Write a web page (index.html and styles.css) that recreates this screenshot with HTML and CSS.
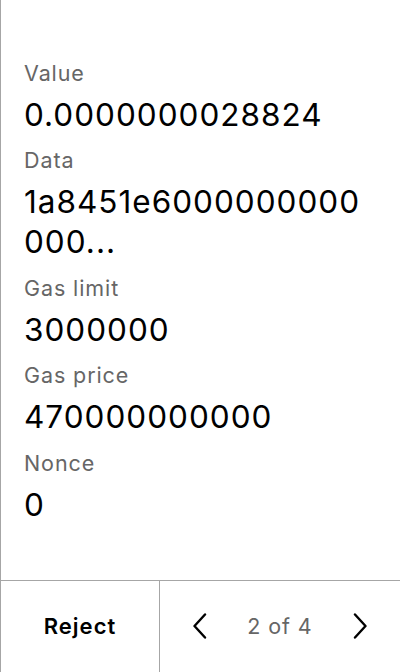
FILE: index.html
```html
<!DOCTYPE html>
<html lang="en">
<head>
<meta charset="utf-8">
<link rel="stylesheet" href="styles.css">
</head>
<body>
<div class="panel">
  <main class="fields">
    <div class="field">
      <div class="label">Value</div>
      <div class="value">0.0000000028824</div>
    </div>
    <div class="field">
      <div class="label">Data</div>
      <div class="value">1a8451e6000000000<br>000...</div>
    </div>
    <div class="field">
      <div class="label">Gas limit</div>
      <div class="value">3000000</div>
    </div>
    <div class="field">
      <div class="label">Gas price</div>
      <div class="value">470000000000</div>
    </div>
    <div class="field">
      <div class="label">Nonce</div>
      <div class="value">0</div>
    </div>
  </main>
  <footer class="footer">
    <button class="reject">Reject</button>
    <div class="pager">
      <button class="chev" aria-label="Previous">
        <svg width="16" height="26" viewBox="0 0 16 26"><path d="M13 1.5 L2.5 13 L13 24.5" fill="none" stroke="#000" stroke-width="2.4" stroke-linecap="round" stroke-linejoin="round"/></svg>
      </button>
      <span class="count">2 of 4</span>
      <button class="chev" aria-label="Next">
        <svg width="16" height="26" viewBox="0 0 16 26"><path d="M3 1.5 L13.5 13 L3 24.5" fill="none" stroke="#000" stroke-width="2.4" stroke-linecap="round" stroke-linejoin="round"/></svg>
      </button>
    </div>
  </footer>
</div>
</body>
</html>
```
FILE: styles.css
```css
html, body {
  margin: 0;
  padding: 0;
  background: #fff;
}
body {
  font-family: Inter, "Noto Sans", sans-serif;
  color: #000;
}
.panel {
  width: 400px;
  height: 672px;
  box-sizing: border-box;
  border-left: 1px solid #a6a6a6;
  display: flex;
  flex-direction: column;
}
.fields {
  flex: 1;
  padding: 58.5px 0 0 23px;
  display: flex;
  flex-direction: column;
  gap: 11.5px;
}
.label {
  font-size: 21.5px;
  line-height: 28px;
  letter-spacing: 0.9px;
  color: #666;
  margin-bottom: 8px;
}
.value {
  font-size: 31.5px;
  line-height: 40px;
  letter-spacing: 1px;
  color: #000;
}
.footer {
  height: 92px;
  border-top: 1px solid #a6a6a6;
  display: flex;
  box-sizing: border-box;
}
button {
  font-family: inherit;
  background: none;
  border: none;
  padding: 0;
  margin: 0;
  color: #000;
}
.reject {
  width: 159px;
  font-size: 22px;
  font-weight: 600;
  letter-spacing: 1px;
  border-right: 1px solid #a6a6a6;
  padding-bottom: 2px;
}
.pager {
  flex: 1;
  display: flex;
  align-items: center;
  justify-content: space-between;
  padding: 0 32px 2px 32px;
}
.chev {
  display: flex;
  align-items: center;
}
.count {
  font-size: 21.5px;
  letter-spacing: 0.9px;
  color: #666;
}
```
